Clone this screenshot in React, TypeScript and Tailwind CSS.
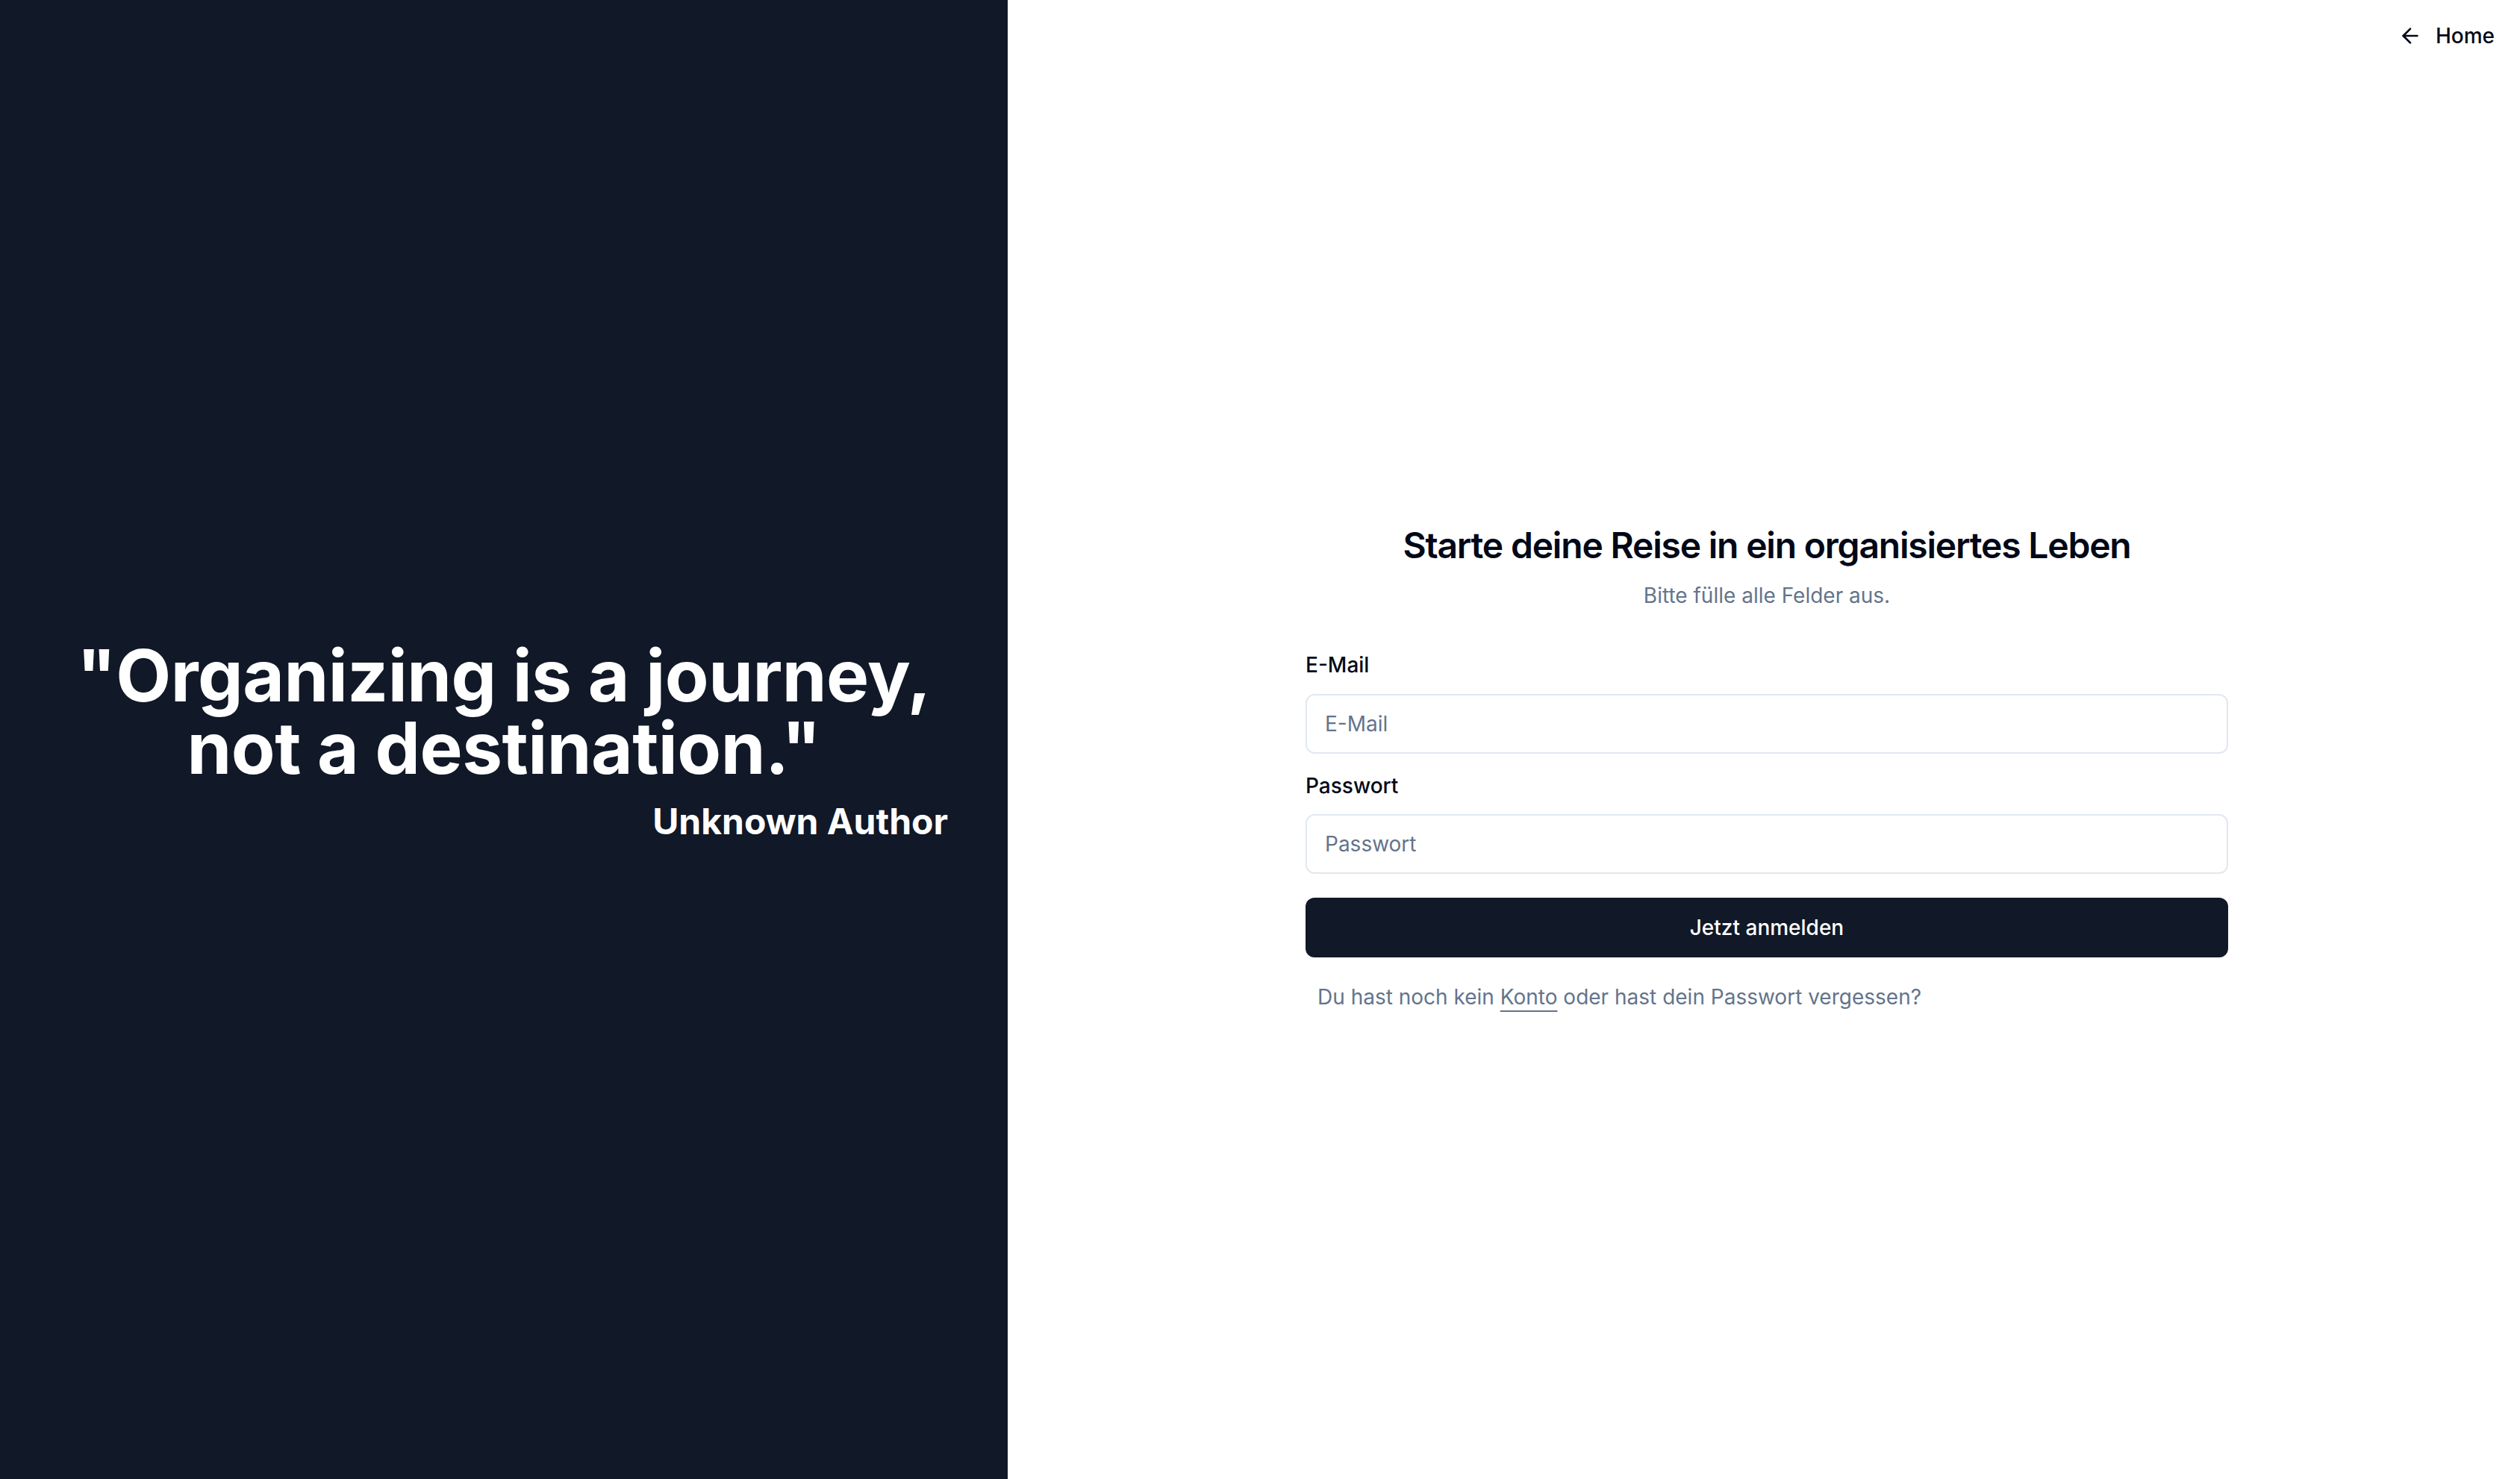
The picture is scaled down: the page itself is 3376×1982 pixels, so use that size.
import React from "react";
import { ArrowLeft } from "lucide-react";

export default function App() {
  return (
    <div
      className="relative flex h-[1982px] w-[3376px] overflow-hidden bg-white"
      style={{ fontFamily: "Inter, 'Noto Sans', sans-serif" }}
    >
      <div className="flex h-full w-[1350px] shrink-0 flex-col items-center justify-center bg-[#111827] px-[80px] pt-[8px]">
        <blockquote className="w-full">
          <p className="text-center text-[96px] font-bold leading-[97px] tracking-[-0.5px] text-white">
            "Organizing is a journey,
            <br />
            not a destination."
          </p>
          <footer className="mt-[18px] text-right text-[48px] font-bold leading-[64px] text-white">
            Unknown Author
          </footer>
        </blockquote>
      </div>

      <a
        href="#"
        className="absolute right-[34px] top-[28px] flex items-center gap-[18px] text-[28px] font-medium leading-[40px] text-[#020817]"
      >
        <ArrowLeft size={32} strokeWidth={2} />
        <span>Home</span>
      </a>

      <div className="flex h-full flex-1 flex-col pt-[699px] pl-[399px]">
        <div className="flex w-[1236px] flex-col">
          <h1 className="text-center text-[48px] font-semibold leading-[64px] tracking-tight text-[#020817]">
            Starte deine Reise in ein organisiertes Leben
          </h1>
          <p className="mt-[15px] text-center text-[28px] leading-[40px] text-[#64748b]">
            Bitte fülle alle Felder aus.
          </p>

          <label className="mt-[59px] text-[28px] font-medium leading-[28px] text-[#020817]">
            E-Mail
          </label>
          <input
            type="email"
            placeholder="E-Mail"
            className="mt-[25px] h-[80px] w-full rounded-[12px] border-2 border-[#e2e8f0] bg-white px-[24px] text-[28px] text-[#020817] outline-none placeholder:text-[#64748b]"
          />

          <label className="mt-[29px] text-[28px] font-medium leading-[28px] text-[#020817]">
            Passwort
          </label>
          <input
            type="password"
            placeholder="Passwort"
            className="mt-[24px] h-[80px] w-full rounded-[12px] border-2 border-[#e2e8f0] bg-white px-[24px] text-[28px] text-[#020817] outline-none placeholder:text-[#64748b]"
          />

          <button className="mt-[32px] flex h-[80px] w-full items-center justify-center rounded-[12px] bg-[#111827] text-[28px] font-medium text-white">
            Jetzt anmelden
          </button>

          <p className="mt-[33px] px-[16px] text-[28px] leading-[40px] text-[#64748b]">
            Du hast noch kein{" "}
            <a href="#" className="underline decoration-2 underline-offset-[8px]">
              Konto
            </a>{" "}
            oder hast dein Passwort vergessen?
          </p>
        </div>
      </div>
    </div>
  );
}
